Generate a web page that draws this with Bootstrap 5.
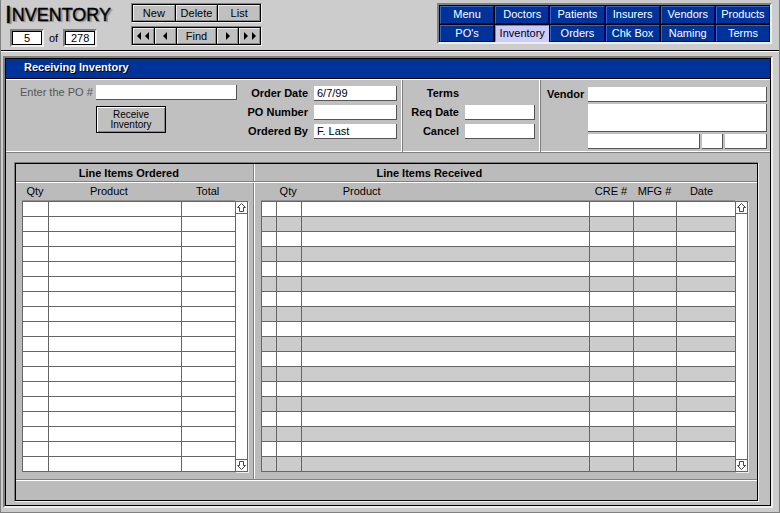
<!DOCTYPE html>
<html lang="en">
<head>
<meta charset="utf-8">
<meta name="viewport" content="width=device-width, initial-scale=1">
<title>Inventory</title>
<link rel="stylesheet" href="https://cdn.jsdelivr.net/npm/bootstrap@5.3.0/dist/css/bootstrap.min.css">
<style>
body{font:11px/15px "Liberation Sans",Arial,sans-serif;color:#000;background:#ccc}
.page{min-height:100vh;border:solid #808080;border-width:0 1px 1px}
.topbar{height:52px;border-bottom:1px solid #fff;box-shadow:inset 0 -1px #000;padding:3px 7px 0 4px}
.brand{width:126px}
.title{font-size:18px;line-height:24px;height:26px;margin:0;font-weight:400;text-shadow:2px 1px 1px #888;-webkit-text-stroke:.4px #000}
.title .initial{font-size:24px;vertical-align:-2px}
.counter{width:34px;height:18px;border:2px solid #808080;border-right-color:#eee;border-bottom-color:#eee;background:#fff;box-shadow:inset 0 0 0 1px #000;text-align:center;padding:0}
.counter-row{padding-left:5px;gap:5px}
.tools{width:131px;gap:3px}
.toolrow{border:1px solid #808080;border-right-color:#eee;border-bottom-color:#eee;background:#000;padding:1px;gap:1px}
.tool{flex:1 1 0;height:16px;padding:0;border:1px solid #eee;border-right-color:#888;border-bottom-color:#888;background:#c0c0c0;line-height:12px;color:#000}
.tool.wide{flex-grow:2}
.tool svg{display:block;margin:auto}
.menu{width:335px;display:grid;grid-template-columns:repeat(6,1fr);border:2px solid #808080;border-right-color:#eee;border-bottom-color:#eee;background:#000;height:41px;padding:1px 0 0 1px;gap:1px}
.menu a{color:#fff;text-decoration:none;text-align:center;background:#039;border:1px solid #36c;border-right-color:#006;border-bottom-color:#006;line-height:14px}
.menu a.current{background:#ccf;color:#000;border-color:#888 #ccf #ccf #888}
.window{margin:4px 6px 4px 2px;border:2px solid #808080;border-right-color:#eee;border-bottom-color:#eee}
.window-in{border:1px solid #000;background:#c0c0c0}
.caption{height:20px;background:#039;border-bottom:1px solid #000;color:#fff;font-size:11px;line-height:17px;font-weight:700;margin:0;padding-left:18px;text-shadow:1px 1px #000}
.form-band{border-top:1px solid #fff;border-bottom:1px solid #808080;box-shadow:inset 0 -1px #fff;height:74px}
.sec{border-right:1px solid #fff;box-shadow:1px 0 #808080;flex:none}
.sec-po{width:233px;padding:5px 2px 0 14px;flex:none}
.sec-order{width:163px;padding-top:6px}
.sec-req{width:138px;padding-top:6px}
.sec-vendor{padding:7px 3px 0 7px;min-width:0}
.field{border:solid #555;border-width:0 1px 1px 0;border-radius:0;background:#fff;height:15px;padding:0 0 0 3px;min-width:0;resize:none;color:#000}
.po-label{color:#555;width:76px;flex:none;white-space:nowrap}
.lab{font-weight:700;text-align:right}
.grid-form{display:grid;gap:4px 6px;align-items:center}
.order-grid{grid-template-columns:69px 83px}
.req-grid{grid-template-columns:57px 70px}
.receive{width:70px;height:27px;margin:6px 0 0 76px;background:#c0c0c0;border:1px solid #000;box-shadow:inset 1px 1px #fff,inset -1px -1px #888;font-size:10px;line-height:10px;padding:0}
.vend-col{gap:2px;min-width:0}
.vend-col textarea{height:28px}
.city{flex:120 1 0}.st{flex:22 1 0}.zip{flex:42 1 0}
.items{margin:9px 11px 3px 8px;border:1px solid #808080;border-right-color:#eee;border-bottom-color:#eee}
.items-in{border:1px solid #000;background:#bbb}
.ordered{flex:238 1 0;min-width:0;border-right:1px solid #fff;box-shadow:inset -1px 0 #808080}
.received{flex:503 1 0;min-width:0}
.part-title{font-size:11px;font-weight:700;line-height:18px;height:19px;margin:0;text-align:center;border-bottom:1px solid #fff;box-shadow:inset 0 -1px #808080}
.ordered .part-title{padding-right:12px}
.received .part-title{padding-right:152px;margin-left:-1px}
.part-body{padding:0 6px 7px}
.received .part-body{padding-right:9px}
.lines{width:100%;table-layout:fixed;border-collapse:separate;border-spacing:0}
.lines th{font-weight:400;height:18px;padding:0 0 2px;line-height:15px;text-align:center;white-space:nowrap}
.lines th.prod{text-align:left;padding-left:42px}
.lines td{height:15px;padding:0;background:#fff;border:solid #666;border-width:0 0 1px 1px}
.lines tbody tr:first-child td{height:16px;border-top-width:1px;box-shadow:0 -1px #909090}
.striped tbody tr:nth-child(even) td{background:#ccc}
.scroll{width:13px;flex:none;margin-top:18px;border:1px solid #666;background:#fff;box-shadow:1px 1px #eee}
.scroll button{display:block;width:100%;height:12px;border:0;padding:0;background:#fff}
.scroll button:first-child{border-bottom:1px solid #666}
.scroll button:last-child{border-top:1px solid #666}
.scroll svg{display:block;margin:auto}
.foot{height:21px;border-top:1px solid #808080;box-shadow:inset 0 1px #fff}
</style>
<script src="https://cdn.jsdelivr.net/npm/bootstrap@5.3.0/dist/js/bootstrap.bundle.min.js"></script>
</head>
<body>
<div class="page d-flex flex-column">
<header class="topbar d-flex align-items-start">
  <div class="brand">
    <h1 class="title"><span class="initial">I</span>NVENTORY</h1>
    <div class="counter-row d-flex align-items-center">
      <input class="counter" aria-label="Record" value="5"><label for="total">of</label><input class="counter" id="total" value="278">
    </div>
  </div>
  <div class="tools d-flex flex-column">
    <div class="toolrow d-flex"><button class="tool">New</button><button class="tool">Delete</button><button class="tool">List</button></div>
    <div class="toolrow d-flex">
      <button class="tool" aria-label="First"><svg width="14" height="8"><path d="M5 0v8L1 4zM13 0v8L9 4z"/></svg></button>
      <button class="tool" aria-label="Previous"><svg width="6" height="8"><path d="M5 0v8L1 4z"/></svg></button>
      <button class="tool wide">Find</button>
      <button class="tool" aria-label="Next"><svg width="6" height="8"><path d="M1 0v8l4-4z"/></svg></button>
      <button class="tool" aria-label="Last"><svg width="14" height="8"><path d="M1 0v8l4-4zM9 0v8l4-4z"/></svg></button>
    </div>
  </div>
  <nav class="menu ms-auto">
    <a href="#">Menu</a><a href="#">Doctors</a><a href="#">Patients</a><a href="#">Insurers</a><a href="#">Vendors</a><a href="#">Products</a>
    <a href="#">PO's</a><a href="#" class="current" aria-current="page">Inventory</a><a href="#">Orders</a><a href="#">Chk Box</a><a href="#">Naming</a><a href="#">Terms</a>
  </nav>
</header>
<main class="window flex-grow-1 d-flex flex-column">
 <div class="window-in flex-grow-1 d-flex flex-column">
  <h2 class="caption">Receiving Inventory</h2>
  <form class="form-band d-flex">
    <div class="sec-po">
      <div class="d-flex"><label class="po-label" for="po">Enter the PO #</label><input class="field flex-grow-1" id="po"></div>
      <button type="button" class="receive">Receive<br>Inventory</button>
    </div>
    <div class="sec sec-order"><div class="grid-form order-grid">
      <label class="lab" for="od">Order Date</label><input class="field" id="od" value="6/7/99">
      <label class="lab" for="pn">PO Number</label><input class="field" id="pn">
      <label class="lab" for="ob">Ordered By</label><input class="field" id="ob" value="F. Last">
    </div></div>
    <div class="sec sec-req"><div class="grid-form req-grid">
      <span class="lab">Terms</span><span></span>
      <label class="lab" for="rd">Req Date</label><input class="field" id="rd">
      <label class="lab" for="ca">Cancel</label><input class="field" id="ca">
    </div></div>
    <div class="sec-vendor d-flex flex-grow-1">
      <label class="lab me-1" for="ve">Vendor</label>
      <div class="vend-col d-flex flex-column flex-grow-1">
        <input class="field" id="ve"><textarea class="field" aria-label="Address"></textarea>
        <div class="vend-col d-flex"><input class="field city" aria-label="City"><input class="field st p-0" aria-label="State"><input class="field zip" aria-label="Zip"></div>
      </div>
    </div>
  </form>
  <section class="items flex-grow-1 d-flex flex-column"><div class="items-in flex-grow-1">
    <div class="d-flex">
      <div class="ordered">
        <h3 class="part-title">Line Items Ordered</h3>
        <div class="part-body d-flex">
          <table class="lines"><colgroup><col style="width:26px"><col><col style="width:54px"></colgroup>
            <thead><tr><th>Qty</th><th class="prod">Product</th><th>Total</th></tr></thead>
            <tbody id="orderedRows"></tbody></table>
          <div class="scroll d-flex flex-column justify-content-between"><button aria-label="Scroll up"><svg width="9" height="9"><path d="M4.5 .5l4 4h-2v4h-4v-4h-2z" fill="none" stroke="#444"/></svg></button><button aria-label="Scroll down"><svg width="9" height="9"><path d="M4.5 8.5l4-4h-2v-4h-4v4h-2z" fill="none" stroke="#444"/></svg></button></div>
        </div>
      </div>
      <div class="received">
        <h3 class="part-title">Line Items Received</h3>
        <div class="part-body d-flex">
          <table class="lines striped"><colgroup><col style="width:15px"><col style="width:25px"><col><col style="width:44px"><col style="width:43px"><col style="width:59px"></colgroup>
            <thead><tr><th></th><th>Qty</th><th class="prod">Product</th><th>CRE #</th><th>MFG #</th><th class="pe-2">Date</th></tr></thead>
            <tbody id="receivedRows"></tbody></table>
          <div class="scroll d-flex flex-column justify-content-between"><button aria-label="Scroll up"><svg width="9" height="9"><path d="M4.5 .5l4 4h-2v4h-4v-4h-2z" fill="none" stroke="#444"/></svg></button><button aria-label="Scroll down"><svg width="9" height="9"><path d="M4.5 8.5l4-4h-2v-4h-4v4h-2z" fill="none" stroke="#444"/></svg></button></div>
        </div>
      </div>
    </div>
    <div class="foot"></div>
  </div></section>
 </div>
</main>
</div>
<script>
const fill=(id,cols)=>{document.getElementById(id).innerHTML=('<tr>'+'<td></td>'.repeat(cols)+'</tr>').repeat(18)};
fill('orderedRows',3);fill('receivedRows',6);
</script>
</body>
</html>
